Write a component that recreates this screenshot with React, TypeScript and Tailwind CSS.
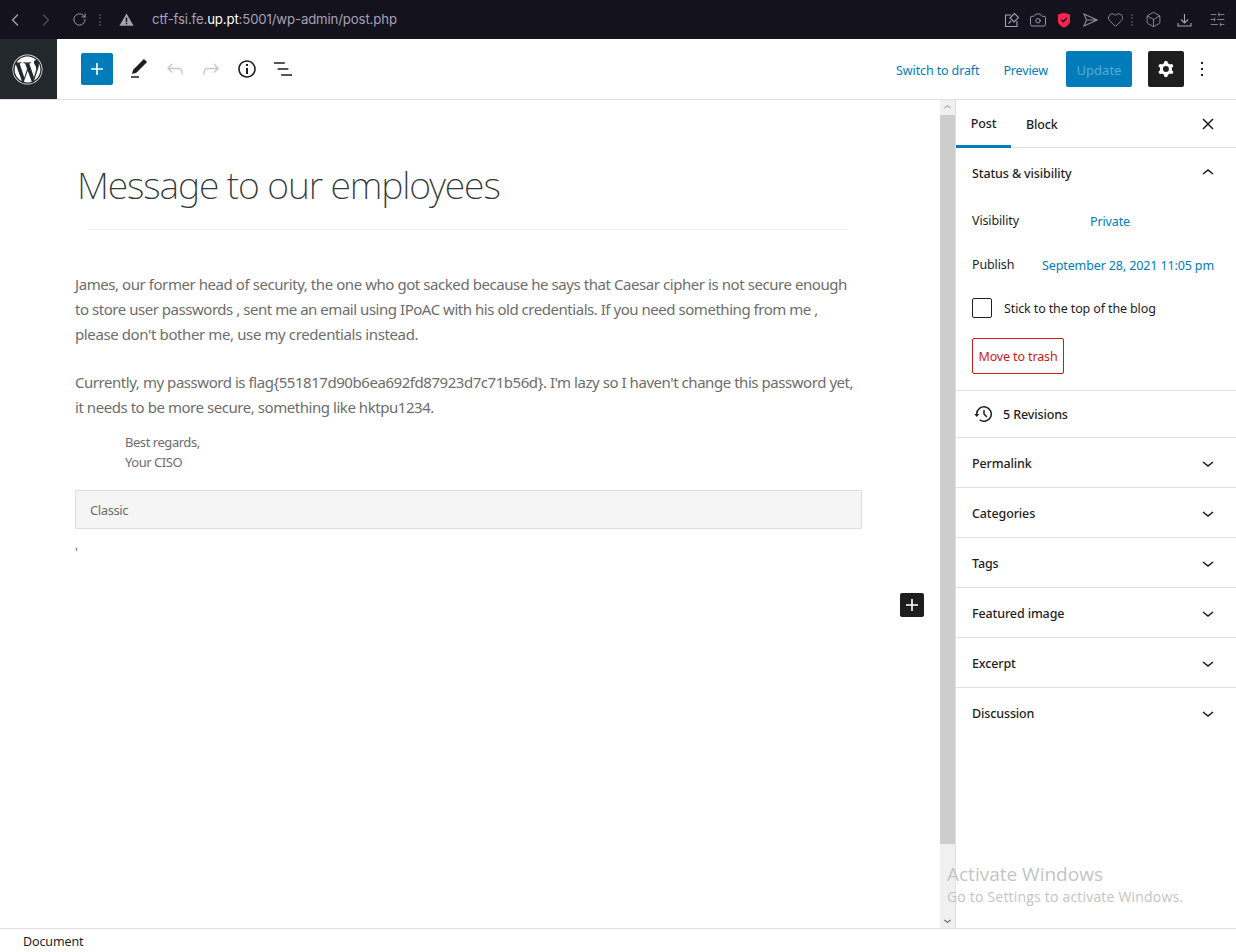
import { ChevronLeft, ChevronRight, RotateCw, Camera, Heart, Box, SlidersHorizontal } from 'lucide-react';
import { FaWordpress } from 'react-icons/fa';

const Icon = ({ d, className = '', size = 24 }: { d: string; className?: string; size?: number }) => (
  <svg width={size} height={size} viewBox="0 0 24 24" fill="currentColor" fillRule="evenodd" className={className}>
    <path d={d} />
  </svg>
);

const icons = {
  plus: 'M18 11.2h-5.2V6h-1.6v5.2H6v1.6h5.2V18h1.6v-5.2H18z',
  pencil: 'M20.1 5.1L16.9 2 6.2 12.7l-1.3 4.4 4.5-1.3L20.1 5.1zM4 20.8h8v-1.5H4v1.5z',
  undo: 'M18.3 11.7c-.6-.6-1.4-.9-2.3-.9H6.7l2.9-3.3-1.1-1-4.5 5L8.5 16l1-1-2.7-2.7H16c.5 0 .9.2 1.3.5 1 1 1 3.4 1 4.5v.3h1.5v-.2c0-1.5 0-4.3-1.5-5.7z',
  redo: 'M15.6 6.5l-1.1 1 2.9 3.3H8c-.9 0-1.7.3-2.3.9-1.4 1.5-1.4 4.2-1.4 5.6v.2h1.5v-.3c0-1.1 0-3.5 1-4.5.3-.3.7-.5 1.3-.5h9.2L14.5 15l1.1 1.1 4.6-4.6-4.6-5z',
  info: 'M12 3.2c-4.8 0-8.8 3.9-8.8 8.8 0 4.8 3.9 8.8 8.8 8.8 4.8 0 8.8-3.9 8.8-8.8 0-4.8-4-8.8-8.8-8.8zm0 16c-4 0-7.2-3.3-7.2-7.2C4.8 8 8 4.8 12 4.8s7.2 3.3 7.2 7.2c0 4-3.2 7.2-7.2 7.2zM11 17h2v-6h-2v6zm0-8h2V7h-2v2z',
  list: 'M13.8 5.2H3v1.5h10.8V5.2zm-3.6 12v1.5H21v-1.5H10.2zm7.2-6H6.6v1.5h10.8v-1.5z',
  cog: 'M10.289 4.836A1 1 0 0111.275 4h1.306a1 1 0 01.987.836l.244 1.466c.787.26 1.503.679 2.108 1.218l1.393-.522a1 1 0 011.216.437l.653 1.13a1 1 0 01-.23 1.273l-1.148.944a6.025 6.025 0 010 2.435l1.149.946a1 1 0 01.23 1.272l-.653 1.13a1 1 0 01-1.216.437l-1.394-.522c-.605.54-1.32.958-2.108 1.218l-.244 1.466a1 1 0 01-.987.836h-1.306a1 1 0 01-.986-.836l-.244-1.466a5.995 5.995 0 01-2.108-1.218l-1.394.522a1 1 0 01-1.217-.436l-.653-1.131a1 1 0 01.23-1.272l1.149-.946a6.026 6.026 0 010-2.435l-1.148-.944a1 1 0 01-.23-1.272l.653-1.131a1 1 0 011.217-.437l1.393.522a5.994 5.994 0 012.108-1.218l.244-1.466zM14.929 12a3 3 0 11-6 0 3 3 0 016 0z',
  more: 'M13 19h-2v-2h2v2zm0-6h-2v-2h2v2zm0-6h-2V5h2v2z',
  up: 'M6.5 12.4L12 8l5.5 4.4-.9 1.2L12 10l-4.5 3.6-1-1.2z',
  down: 'M17.5 11.6L12 16l-5.5-4.4.9-1.2L12 14l4.5-3.6 1 1.2z',
  backup: 'M5.5 12h1.75l-2.5 3-2.5-3H4a8 8 0 113.134 6.35l.907-1.194A6.5 6.5 0 105.5 12zm9.53 1.97l-2.28-2.28V8.5a.75.75 0 00-1.5 0V12c0 .199.079.39.22.53l2.5 2.5a.75.75 0 101.06-1.06z',
};

const BrowserBar = () => (
  <div className="h-[39px] shrink-0 bg-[#13121d] flex items-center text-[#a6a2b5] font-['Inter',sans-serif]">
    <ChevronLeft size={20} strokeWidth={1.5} className="ml-[5px]" />
    <ChevronRight size={20} strokeWidth={1.5} className="ml-[11px] text-[#4e4c5a]" />
    <RotateCw size={15} strokeWidth={1.5} className="ml-[16px]" />
    <div className="ml-[12px] w-[2px] h-[12px] border-l-2 border-dotted border-[#3d3b48]" />
    <svg width="15" height="13" viewBox="0 0 15 13" className="ml-[18px]">
      <path d="M7.5 0.5 14.6 12.8H0.4z" fill="#a6a2b5" />
      <rect x="6.8" y="4.5" width="1.4" height="4.5" fill="#13121d" />
      <rect x="6.8" y="9.8" width="1.4" height="1.4" fill="#13121d" />
    </svg>
    <div className="ml-[18px] text-[13.2px] tracking-[-0.01em]">
      ctf-fsi.fe.<span className="text-white">up.pt</span>:5001/wp-admin/post.php
    </div>
    <div className="ml-auto flex items-center">
      <svg width="16" height="16" viewBox="0 0 16 16" fill="none" stroke="#a6a2b5" strokeWidth="1.1" className="mr-[9px]">
        <path d="M7 3H1.500v11.500H13V9" />
        <path d="M4.500 11.500 7 9M6 6l4.500-4.500 4 4L10 10z" />
      </svg>
      <Camera size={18} strokeWidth={1.2} className="mr-[10px]" />
      <svg width="14" height="16" viewBox="0 0 14 16" className="mr-[12px]">
        <path d="M1 2.500 7 .8l6 1.700V9c0 3-3 5.500-6 6.500C4 14.500 1 12 1 9z" fill="#ff2450" />
        <path d="M4 7.500 6.300 9.800 10 6" fill="none" stroke="#13121d" strokeWidth="1.500" />
      </svg>
      <svg width="15" height="14" viewBox="0 0 15 14" fill="none" stroke="#8f8b9c" strokeWidth="1.1" className="mr-[9px]">
        <path d="M1 1 14 7 1 13 3.500 7zM3.500 7H14" />
      </svg>
      <Heart size={17} strokeWidth={1.1} className="mr-[7px]" />
      <div className="w-[2px] h-[12px] border-l-2 border-dotted border-[#3d3b48] mr-[12px]" />
      <Box size={17} strokeWidth={1.1} className="mr-[15px]" />
      <svg width="15" height="14" viewBox="0 0 15 14" fill="none" stroke="#a6a2b5" strokeWidth="1.1" className="mr-[17px]">
        <path d="M7.500 1v9M4 6.500l3.500 3.500L11 6.500M1 10v3h13v-3" />
      </svg>
      <SlidersHorizontal size={17} strokeWidth={1.1} className="mr-[10px]" />
    </div>
  </div>
);

const Toolbar = () => (
  <div className="h-[61px] shrink-0 bg-white border-b border-[#e0e0e0] flex items-center font-['Noto_Sans',sans-serif]">
    <div className="w-[57px] h-[60px] bg-[#23282d] flex items-center justify-center text-white pr-[2px]">
      <FaWordpress size={31} />
    </div>
    <div className="ml-[24px] w-[32px] h-[32px] rounded-[2px] bg-[#007cba] text-white flex items-center justify-center">
      <Icon d={icons.plus} />
    </div>
    <Icon d={icons.pencil} className="ml-[14px] text-[#1e1e1e]" />
    <Icon d={icons.undo} className="ml-[12px] text-[#c8c8c8]" />
    <Icon d={icons.redo} className="ml-[12px] text-[#c8c8c8]" />
    <Icon d={icons.info} className="ml-[12px] text-[#1e1e1e]" />
    <Icon d={icons.list} className="ml-[12px] text-[#1e1e1e]" />
    <div className="ml-auto flex items-center">
      <span className="pt-[5px] text-[12.5px] text-[#007cba] tracking-[-0.01em] mr-[24px]">Switch to draft</span>
      <span className="pt-[5px] text-[12.5px] text-[#007cba] tracking-[-0.01em] mr-[18px]">Preview</span>
      <div className="w-[66px] h-[36px] rounded-[2px] bg-[#007cba] text-[#5aa9d3] text-[13px] flex items-center justify-center pt-[3px]">Update</div>
      <div className="ml-[16px] w-[36px] h-[36px] rounded-[2px] bg-[#1e1e1e] text-white flex items-center justify-center">
        <Icon d={icons.cog} />
      </div>
      <Icon d={icons.more} className="ml-[6px] mr-[22px] text-[#1e1e1e]" />
    </div>
  </div>
);

const Scrollbar = () => (
  <div className="w-[15px] shrink-0 bg-[#f0f0f0] flex flex-col">
    <div className="h-[15px] flex items-center justify-center text-[#a3a3a3]">
      <Icon d={icons.up} size={15} />
    </div>
    <div className="h-[729px] bg-[#cdcdcd]" />
    <div className="flex-1" />
    <div className="h-[15px] flex items-center justify-center text-[#505050]">
      <Icon d={icons.down} size={15} />
    </div>
  </div>
);

const Editor = () => (
  <div className="flex-1 relative font-['Noto_Sans',sans-serif] pl-[75px] pt-[58px]">
    <h1 className="pl-[2px] text-[37.5px] leading-[54px] font-extralight text-[#32373c] tracking-[-0.03em]">Message to our employees</h1>
    <div className="ml-[13px] mt-[17px] w-[760px] h-px bg-[#eeeeee]" />
    <div className="mt-[42px] w-[790px] text-[15px] leading-[25px] text-[#6d6d6d] tracking-[-0.03em]">
      <p><span className="tracking-[-0.029em]">James, our former head of security, the one who got sacked because he says that Caesar cipher is not secure enough</span><br /><span className="tracking-[-0.031em]">to store user passwords , sent me an email using IPoAC with his old credentials. If you need something from me ,</span><br /><span className="tracking-[-0.026em]">please don't bother me, use my credentials instead.</span></p>
      <p className="mt-[23px]">Currently, my password is flag{'{'}551817d90b6ea692fd87923d7c71b56d{'}'}. I'm lazy so I haven't change this password yet,<br />it needs to be more secure, something like hktpu1234.</p>
    </div>
    <div className="mt-[12px] ml-[50px] text-[13px] leading-[20px] text-[#6d6d6d] tracking-[-0.035em]">
      <p>Best regards,</p>
      <p>Your CISO</p>
    </div>
    <div className="mt-[18px] w-[787px] h-[39px] bg-[#f5f5f5] border border-[#dddddd] rounded-[1px] flex items-center pl-[14px] pt-[2px] text-[13px] text-[#6d6d6d] tracking-[-0.03em]">Classic</div>
    <div className="mt-[13px] text-[13px] leading-[20px] text-[#6d6d6d]">'</div>
    <div className="absolute left-[900px] top-[493px] w-[24px] h-[24px] rounded-[2px] bg-[#1e1e1e] text-white flex items-center justify-center">
      <Icon d={icons.plus} />
    </div>
  </div>
);

const Row = ({ label }: { label: string }) => (
  <div className="h-[50px] border-b border-[#e0e0e0] flex items-center justify-between pl-[16px] pr-[16px] last:border-b-0">
    <span className="font-medium pt-[3px]">{label}</span>
    <Icon d={icons.down} className="text-[#1e1e1e]" />
  </div>
);

const Sidebar = () => (
  <div className="w-[281px] shrink-0 border-l border-[#e0e0e0] bg-white font-['Noto_Sans',sans-serif] text-[12.5px] text-[#1e1e1e] tracking-[-0.01em]">
    <div className="h-[48px] border-b border-[#e0e0e0] flex items-center relative">
      <div className="w-[55px] h-[48px] flex items-center justify-center font-medium border-b-[3px] border-[#007cba] pt-[5px]">Post</div>
      <div className="ml-[15px] font-medium pt-[3px]">Block</div>
      <svg width="12" height="12" viewBox="0 0 12 12" fill="none" stroke="currentColor" strokeWidth="1.5" className="ml-auto mr-[22px]">
        <path d="M1 1 11 11M11 1 1 11" />
      </svg>
    </div>
    <div className="h-[243px] border-b border-[#e0e0e0] px-[16px]">
      <div className="h-[50px] flex items-center justify-between font-medium">
        <span className="pt-[2px]">Status &amp; visibility</span>
        <Icon d={icons.up} />
      </div>
      <div className="mt-[14px] h-[18px] flex items-center">
        <span className="w-[118px]">Visibility</span>
        <span className="text-[#007cba] pt-[2px]">Private</span>
      </div>
      <div className="mt-[25px] h-[18px] flex items-center justify-between">
        <span className="pt-[3px]">Publish</span>
        <span className="text-[#007cba] mr-[6px] pt-[5px]">September 28, 2021 11:05 pm</span>
      </div>
      <div className="mt-[25px] flex items-center">
        <div className="w-[20px] h-[20px] rounded-[2px] border border-[#1e1e1e]" />
        <span className="ml-[12px] pt-[2px] tracking-[-0.01em]">Stick to the top of the blog</span>
      </div>
      <div className="mt-[19px] w-[92px] h-[36px] rounded-[2px] border border-[#cc1818] text-[#cc1818] flex items-center justify-center pt-[3px]">Move to trash</div>
    </div>
    <div className="h-[47px] border-b border-[#e0e0e0] flex items-center pl-[16px] font-medium">
      <Icon d={icons.backup} />
      <span className="ml-[7px] pt-[2px]">5 Revisions</span>
    </div>
    {['Permalink', 'Categories', 'Tags', 'Featured image', 'Excerpt', 'Discussion'].map((label) => (
      <Row key={label} label={label} />
    ))}
  </div>
);

export default function App() {
  return (
    <div className="w-[1236px] h-[952px] bg-white flex flex-col overflow-hidden relative">
      <BrowserBar />
      <Toolbar />
      <div className="flex-1 flex min-h-0">
        <Editor />
        <Scrollbar />
        <Sidebar />
      </div>
      <div className="h-[24px] shrink-0 border-t border-[#e0e0e0] flex items-center pl-[23px] pt-[3px] font-['Noto_Sans',sans-serif] text-[12.5px] text-[#1e1e1e] tracking-[-0.01em]">Document</div>
      <div className="absolute left-[947px] top-[861px] font-['Open_Sans',sans-serif] text-[#c4c4c4] pointer-events-none">
        <div className="text-[19px] leading-[26px]">Activate Windows</div>
        <div className="text-[14px] leading-[20px] tracking-[0.014em]">Go to Settings to activate Windows.</div>
      </div>
    </div>
  );
}
